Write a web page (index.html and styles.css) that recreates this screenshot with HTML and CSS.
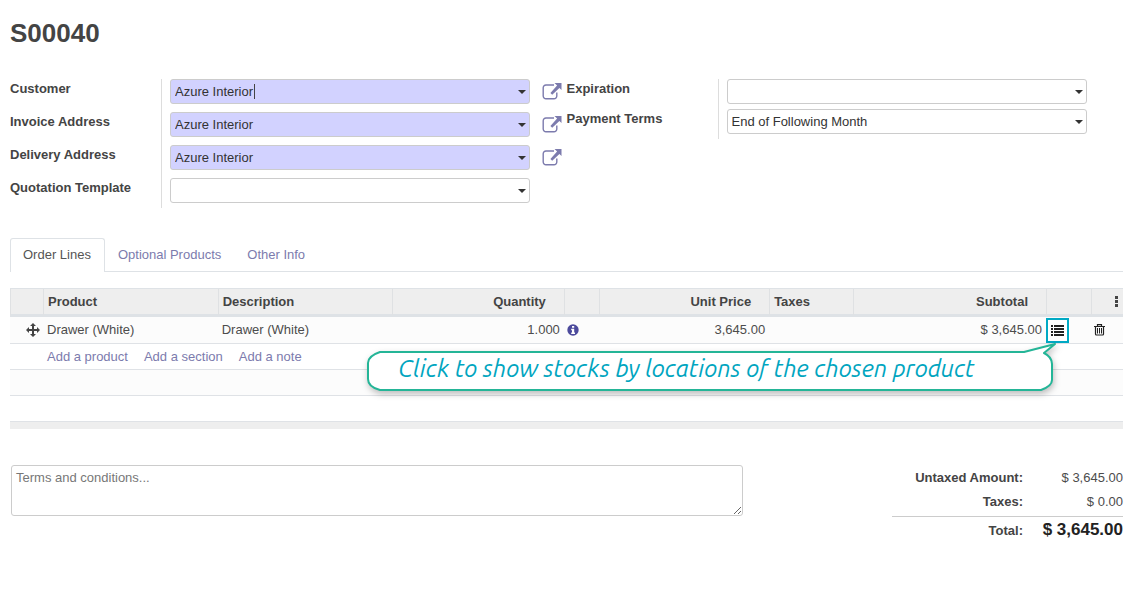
FILE: index.html
```html
<!DOCTYPE html>
<html lang="en">
<head>
<meta charset="utf-8">
<title>S00040</title>
<link rel="stylesheet" href="styles.css">
</head>
<body>
<svg class="defs" width="0" height="0" aria-hidden="true">
  <symbol id="external" viewBox="0 0 20 18">
    <path d="M12 2H4A2.8 2.8 0 0 0 1.2 4.800V13A2.800 2.800 0 0 0 4 15.800H12A2.800 2.800 0 0 0 14.800 13V9.500" fill="none" stroke="currentColor" stroke-width="1.400"/>
    <path d="M12.500 0H19.500V7L17.400 4.900L10.200 11.800L8.400 10L15.100 2.600Z" fill="currentColor"/>
  </symbol>
</svg>
<main class="page">
  <h1 class="title">S00040</h1>

  <div class="groups">
    <div class="group">
      <div class="labels">
        <label for="customer">Customer</label>
        <label for="invoice">Invoice Address</label>
        <label for="delivery">Delivery Address</label>
        <label for="template">Quotation Template</label>
      </div>
      <div class="fields">
        <div class="row">
          <div class="combo"><input class="field required" id="customer" type="text" value="Azure Interior"><span class="caret"></span></div>
          <button class="icon-button" type="button" aria-label="Open customer"><svg width="20" height="18"><use href="#external"/></svg></button>
        </div>
        <div class="row">
          <div class="combo"><select class="field required" id="invoice"><option>Azure Interior</option></select></div>
          <button class="icon-button" type="button" aria-label="Open invoice address"><svg width="20" height="18"><use href="#external"/></svg></button>
        </div>
        <div class="row">
          <div class="combo"><select class="field required" id="delivery"><option>Azure Interior</option></select></div>
          <button class="icon-button" type="button" aria-label="Open delivery address"><svg width="20" height="18"><use href="#external"/></svg></button>
        </div>
        <div class="row">
          <div class="combo"><select class="field" id="template"><option></option></select></div>
        </div>
      </div>
    </div>
    <div class="group compact">
      <div class="labels">
        <label for="expiration">Expiration</label>
        <label for="terms">Payment Terms</label>
      </div>
      <div class="fields">
        <div class="row">
          <div class="combo"><input class="field" id="expiration" type="text"></div>
        </div>
        <div class="row">
          <div class="combo"><select class="field" id="terms"><option>End of Following Month</option></select></div>
        </div>
      </div>
    </div>
  </div>

  <nav class="tabs">
    <a class="tab active" href="#lines">Order Lines</a>
    <a class="tab" href="#optional">Optional Products</a>
    <a class="tab" href="#other">Other Info</a>
  </nav>

  <div class="lines" id="lines">
    <table class="grid">
      <colgroup>
        <col class="c-handle"><col class="c-product"><col class="c-description"><col class="c-quantity"><col class="c-info"><col class="c-price"><col class="c-taxes"><col><col class="c-stock"><col class="c-trash">
      </colgroup>
      <thead>
        <tr>
          <th></th><th>Product</th><th>Description</th><th class="num">Quantity</th><th></th><th class="num">Unit Price</th><th>Taxes</th><th class="num">Subtotal</th><th></th>
          <th class="menu"><button class="icon-button" type="button" aria-label="Columns"><svg width="3" height="11" fill="#444"><path d="M0 0h3v3H0zM0 4h3v3H0zM0 8h3v3H0z"/></svg></button></th>
        </tr>
      </thead>
      <tbody>
        <tr class="odd">
          <td class="handle"><svg width="14" height="14" viewBox="0 0 14 14" fill="#444"><path d="M7 0l3 3H8v3h3V4l3 3-3 3V8H8v3h2l-3 3-3-3h2V8H3v2L0 7l3-3v2h3V3H4z"/></svg></td>
          <td>Drawer (White)</td>
          <td>Drawer (White)</td>
          <td class="num">1.000</td>
          <td class="info"><button class="icon-button" type="button" aria-label="Availability"><svg width="12" height="12" viewBox="0 0 12 12"><circle cx="6" cy="6" r="5.700" fill="#4c4a9c"/><path d="M5 2h2.200v1.800H5zM4.200 4.800h3v3.700h.8V10H4.200V8.500H5V6.200h-.8z" fill="#fff"/></svg></button></td>
          <td class="num">3,645.00</td>
          <td></td>
          <td class="num">$ 3,645.00</td>
          <td class="stock"><button class="stock-button" type="button" aria-label="Stocks by locations"><svg width="13" height="11" fill="#222"><path d="M0 0h2v2H0zM3 0h10v2H3zM0 3h2v2H0zM3 3h10v2H3zM0 6h2v2H0zM3 6h10v2H3zM0 9h2v2H0zM3 9h10v2H3z"/></svg></button></td>
          <td class="trash"><button class="icon-button" type="button" aria-label="Delete line"><svg width="11" height="12" viewBox="0 0 11 12" fill="none" stroke="#222"><path d="M0 2.500h11M3.500 2.500V.6h4v1.900M1.500 2.500v7.500q0 1 1 1h6q1 0 1-1V2.500" stroke-width="1.200"/><path d="M3.500 4v5.500M5.500 4v5.500M7.500 4v5.500"/></svg></button></td>
        </tr>
        <tr>
          <td></td>
          <td colspan="9"><div class="adders"><a href="#product">Add a product</a><a href="#section">Add a section</a><a href="#note">Add a note</a></div></td>
        </tr>
        <tr class="odd"><td colspan="10"></td></tr>
        <tr><td colspan="10"></td></tr>
      </tbody>
      <tfoot><tr><td colspan="10"></td></tr></tfoot>
    </table>
    <div class="callout">
      <svg class="bubble" width="690" height="52" viewBox="0 0 690 52"><path d="M14 9H658L689 1L678 10Q686 14 686 21V37Q686 43 675 47H14Q2 44 2 36V20Q2 13 14 9Z" fill="#fff" stroke="#24b597" stroke-width="2" stroke-linejoin="round"/></svg>
      <span class="callout-text">Click to show stocks by locations of the chosen product</span>
    </div>
  </div>

  <div class="bottom">
    <textarea class="note" aria-label="Terms and conditions" placeholder="Terms and conditions..."></textarea>
    <dl class="totals">
      <dt>Untaxed Amount:</dt><dd>$ 3,645.00</dd>
      <dt>Taxes:</dt><dd>$ 0.00</dd>
      <dt class="sum">Total:</dt><dd class="sum grand">$ 3,645.00</dd>
    </dl>
  </div>
</main>
</body>
</html>
```
FILE: styles.css
```css
* { box-sizing: border-box; }
body {
  margin: 0;
  background: #fff;
  color: #4c4c4c;
  font: 13px/20px "Liberation Sans", Arial, sans-serif;
}
.defs { position: absolute; }
.page { padding: 16px 7px 16px 10px; }
a { color: #7c7bad; text-decoration: none; }
svg { display: block; }
button, input, select, textarea { font: inherit; }

.title {
  margin: 0 0 28px;
  color: #444;
  font-size: 26px;
  line-height: 35px;
}

.groups { display: grid; grid-template-columns: 1fr 1fr; align-items: start; }
.group { display: grid; grid-template-columns: 151px 1fr; }
.labels {
  display: flex;
  flex-direction: column;
  gap: 13px;
  color: #444;
  font-weight: bold;
}
.compact .labels { gap: 10px; }
.fields {
  display: flex;
  flex-direction: column;
  gap: 8px;
  padding: 0 0 5px 8px;
  border-left: 1px solid #ddd;
}
.compact .fields { gap: 5px; }
.row { display: flex; align-items: center; gap: 12px; }
.combo { position: relative; width: 91%; max-width: 360px; }
.combo::after {
  content: "";
  position: absolute;
  right: 4px;
  top: 11px;
  border: 4px solid transparent;
  border-top-color: #333;
  border-bottom: 0;
  pointer-events: none;
}
.field {
  display: block;
  width: 100%;
  height: 25px;
  padding: 0 4px;
  border: 1px solid #ccc;
  border-radius: 3px;
  background: #fff;
  color: #333;
  appearance: none;
  outline: none;
}
.required { background: #d2d2ff; }
.caret {
  position: absolute;
  left: 84px;
  top: 5px;
  width: 1px;
  height: 15px;
  background: #444;
}
.icon-button {
  padding: 0;
  border: 0;
  background: none;
  color: #7c7bad;
}

.tabs {
  display: flex;
  margin-top: 30px;
  border-bottom: 1px solid #dee2e6;
}
.tab { padding: 7px 13px 6px; }
.tab.active {
  margin-bottom: -1px;
  padding: 6px 13px 7px 12px;
  border: 1px solid #dee2e6;
  border-bottom: 0;
  border-radius: 3px 3px 0 0;
  background: #fff;
  color: #555;
}

.lines { position: relative; margin-top: 16px; }
.grid {
  width: 100%;
  table-layout: fixed;
  border-collapse: separate;
  border-spacing: 0;
}
.c-handle { width: 33px; }
.c-product { width: 15.7%; }
.c-description { width: 15.7%; }
.c-quantity { width: 15.4%; }
.c-info { width: 35px; }
.c-price { width: 15.3%; }
.c-taxes { width: 7.5%; }
.c-stock { width: 45px; }
.c-trash { width: 32px; }
.grid th {
  height: 29px;
  padding: 0 4px;
  border-top: 1px solid #dee2e6;
  border-bottom: 3px solid #dee2e6;
  border-left: 1px solid #dfe1e3;
  background: #eee;
  color: #444;
  text-align: left;
}
.grid td {
  height: 26px;
  padding: 0 4px;
  border-bottom: 1px solid #dfe2e6;
}
.odd td { background: #fcfcfc; }
.grid tbody tr:first-child td { height: 27px; }
.grid .num { text-align: right; }
.grid th.num { padding-right: 18px; }
.grid th.menu { padding: 0 5px 0 0; }
.menu .icon-button { display: block; margin-left: auto; }
.grid td.handle { padding: 0 0 0 16px; }
.grid td.info { padding: 0 3px; }
.grid td.stock { padding: 0; }
.grid td.trash { padding: 0 3px; }
.info .icon-button, .trash .icon-button { display: block; }
.stock-button {
  display: grid;
  place-items: center;
  width: 23px;
  height: 25px;
  padding: 0;
  border: 2px solid #00a9c4;
  background: #fff;
}
.adders { display: flex; gap: 16px; }
.grid tfoot td { height: 7px; border: 0; background: #eee; }

.callout {
  position: absolute;
  right: 67px;
  top: 55px;
}
.bubble { filter: drop-shadow(1px 3px 3px rgba(0, 0, 0, 0.25)); }
.callout-text {
  position: absolute;
  left: 32px;
  top: 11px;
  color: #00a5bf;
  font: italic 24px/30px Ubuntu, "Noto Sans", sans-serif;
  white-space: nowrap;
}

.bottom {
  display: flex;
  gap: 149px;
  align-items: flex-start;
  margin-top: 36px;
}
.note {
  flex: 1;
  height: 51px;
  margin-left: 1px;
  padding: 2px 4px;
  border: 1px solid #ccc;
  border-radius: 3px;
  color: #444;
}
.note::placeholder { color: #777; }
.totals {
  display: grid;
  grid-template-columns: 131px 100px;
  margin: 0;
  padding-top: 3px;
  text-align: right;
}
.totals dt { height: 24px; color: #444; font-weight: bold; }
.totals dd { height: 24px; margin: 0; }
.totals .sum {
  height: 30px;
  border-top: 1px solid #ccc;
  padding-top: 4px;
}
.totals .grand { padding-top: 3px; color: #222; font-size: 17px; font-weight: bold; }
```
